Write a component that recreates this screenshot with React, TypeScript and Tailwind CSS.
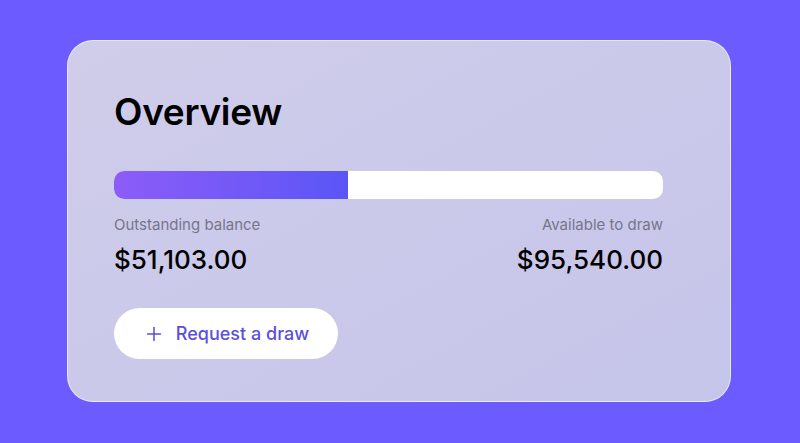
import { Plus } from "lucide-react";

export default function App() {
  return (
    <div className="w-[800px] h-[443px] bg-[#6c5cff] pl-[67px] pt-[40px] font-['Inter',sans-serif]">
      <div className="w-[664px] h-[362px] rounded-[26px] border border-white/60 bg-gradient-to-br from-[#d0cdea] to-[#c5c5ea] px-[46px] pt-[52px]">
        <h1 className="text-[37px] leading-none font-semibold tracking-[-0.3px] text-black">Overview</h1>

        <div className="mt-[41px] h-[28px] w-[549px] rounded-[10px] bg-white flex overflow-hidden">
          <div className="h-full w-[234px] bg-gradient-to-r from-[#8c5cf8] to-[#5a55f6]" />
        </div>

        <div className="mt-[16px] flex justify-between w-[549px]">
          <div className="flex flex-col">
            <span className="text-[15px] leading-[20px] text-[#76758a]">Outstanding balance</span>
            <span className="mt-[10px] text-[26px] leading-[30px] font-medium text-black">$51,103.00</span>
          </div>
          <div className="flex flex-col items-end">
            <span className="text-[15px] leading-[20px] text-[#76758a]">Available to draw</span>
            <span className="mt-[10px] text-[26px] leading-[30px] font-medium text-black">$95,540.00</span>
          </div>
        </div>

        <button className="mt-[33px] h-[51px] w-[224px] rounded-full bg-white flex items-center justify-center gap-[11px] text-[#5b50d8]">
          <Plus size={22} strokeWidth={1.7} />
          <span className="text-[18px] font-medium">Request a draw</span>
        </button>
      </div>
    </div>
  );
}
